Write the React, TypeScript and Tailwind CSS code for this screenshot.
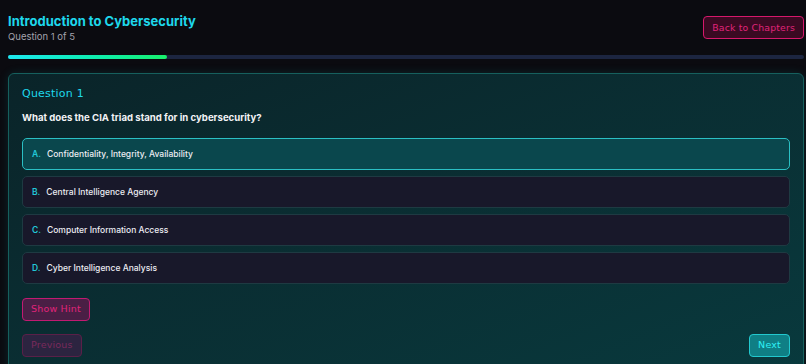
import React, { useState } from "react";

const options = [
  { key: "A", text: "Confidentiality, Integrity, Availability" },
  { key: "B", text: "Central Intelligence Agency" },
  { key: "C", text: "Computer Information Access" },
  { key: "D", text: "Cyber Intelligence Analysis" },
];

const tech = "font-['DejaVu_Sans',sans-serif] tracking-[0.02em]";

export default function App() {
  const [selected, setSelected] = useState("A");

  return (
    <div className="h-[364px] w-full overflow-hidden bg-[#0b0b10] pl-2 pr-[2px] font-['Inter',sans-serif]">
      <header className="flex items-start justify-between pt-[12px]">
        <div>
          <h1 className="text-[13px] font-bold leading-[18px] text-[#1ed8ec]">
            Introduction to Cybersecurity
          </h1>
          <p className="text-[9.5px] leading-[13px] text-[#a3a3ad]">Question 1 of 5</p>
        </div>
        <button
          className={`mt-[4px] h-[23px] rounded-[4px] border border-[#d6186b] bg-[#3a0a22] px-[8px] text-[9.3px] text-[#e0247a] ${tech}`}
        >
          Back to Chapters
        </button>
      </header>

      <div className="mt-[12px] h-[4px] w-full rounded-full bg-[#1c2540]">
        <div className="h-full w-1/5 rounded-full bg-gradient-to-r from-[#1ee8f0] to-[#19f06a]" />
      </div>

      <main className="mt-[14px] h-[320px] rounded-[6px] border border-[#16605e] bg-gradient-to-br from-[#0a2429] to-[#083a3e] px-[13px] pt-[13px] shadow-[0_0_10px_rgba(20,180,180,0.15)]">
        <h2 className={`text-[11px] leading-[14px] text-[#1ed8ec] ${tech}`}>Question 1</h2>
        <p className="mt-[10px] text-[9.6px] font-bold leading-[14px] text-[#f2f2f5]">
          What does the CIA triad stand for in cybersecurity?
        </p>

        <div className="mt-[13px] flex flex-col gap-[6px]">
          {options.map((o) => {
            const active = selected === o.key;
            return (
              <button
                key={o.key}
                onClick={() => setSelected(o.key)}
                className={
                  active
                    ? "flex h-[32px] items-center gap-[6px] rounded-[5px] border border-[#2bc0c4] bg-[#0a474d] px-[9px] text-left"
                    : "flex h-[32px] items-center gap-[6px] rounded-[5px] border border-[#1e3a42] bg-[#18182a] px-[9px] text-left"
                }
              >
                <span className="text-[8.5px] font-semibold text-[#22c7d8]">{o.key}.</span>
                <span className="text-[8.5px] font-medium text-[#ececf2]">{o.text}</span>
              </button>
            );
          })}
        </div>

        <button
          className={`mt-[14px] h-[23px] rounded-[4px] border border-[#c21a72] bg-[#4a1f45] px-[8px] text-[9.5px] text-[#e0247a] ${tech}`}
        >
          Show Hint
        </button>

        <div className="mt-[13px] flex items-center justify-between">
          <button
            disabled
            className={`h-[23px] rounded-[4px] border border-[#5a2048] bg-[#2c2440] px-[8px] text-[9.5px] text-[#7a2a5c] ${tech}`}
          >
            Previous
          </button>
          <button
            className={`h-[23px] rounded-[4px] border border-[#22c9cf] bg-[#0f7f85] px-[8px] text-[9.5px] text-[#2ef0f5] ${tech}`}
          >
            Next
          </button>
        </div>
      </main>
    </div>
  );
}
